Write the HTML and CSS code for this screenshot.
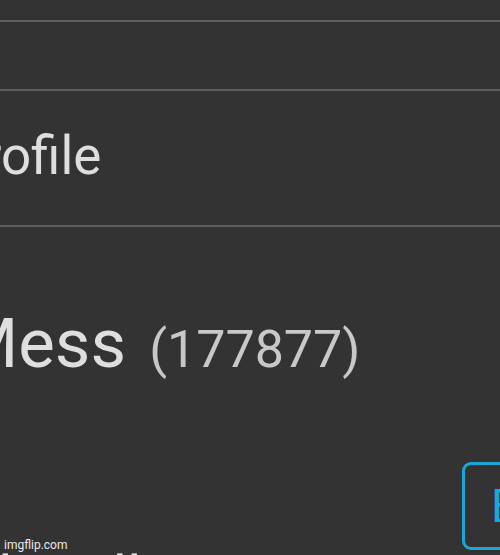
FILE: index.html
```html
<!DOCTYPE html>
<html lang="en">
<head>
<meta charset="utf-8">
<title>Profile</title>
<link rel="stylesheet" href="styles.css">
</head>
<body>
<main class="screen">
  <div class="top-gap"></div>
  <div class="row row-empty"></div>
  <div class="row row-label">
    <span class="label">Profile</span>
  </div>
  <section class="user">
    <h1 class="username">Mess <span class="points">(177877)</span></h1>
  </section>
  <div class="actions">
    <span class="sub">l. Bell</span>
    <button class="edit-btn" type="button">Edit</button>
  </div>
</main>
<div class="watermark">imgflip.com</div>
</body>
</html>
```
FILE: styles.css
```css
html, body {
  margin: 0;
  padding: 0;
  background: #333333;
  width: 500px;
  height: 555px;
  overflow: hidden;
}
body {
  position: relative;
  font-family: Roboto, "Noto Sans", sans-serif;
  color: #dedede;
}
.screen {
  display: flex;
  flex-direction: column;
  width: 500px;
  height: 555px;
  overflow: hidden;
}
.top-gap {
  height: 20px;
  flex: none;
}
.row {
  border-top: 2px solid #5f5f5f;
  flex: none;
}
.row-empty {
  height: 67px;
}
.row-label {
  display: flex;
  padding: 39px 0 42px 0;
  border-bottom: 2px solid #5f5f5f;
}
.label {
  font-size: 53px;
  line-height: 1;
  margin-left: -50px;
  white-space: nowrap;
}
.user {
  flex: none;
  padding-top: 82px;
}
.username {
  margin: 0;
  font-weight: 400;
  font-size: 69px;
  line-height: 1;
  white-space: nowrap;
  margin-left: -42px;
  color: #dedede;
}
.points {
  font-size: 52px;
  margin-left: 6px;
  color: #c8c8c8;
}
.actions {
  flex: none;
  display: flex;
  align-items: flex-start;
  margin-top: 84px;
}
.sub {
  flex: 1;
  padding-top: 86px;
  font-size: 60px;
  line-height: 1;
  white-space: nowrap;
  color: #dedede;
  margin-left: -2px;
}
.edit-btn {
  flex: none;
  width: 130px;
  height: 88px;
  margin-right: -92px;
  background: transparent;
  border: 3px solid #1ba8d9;
  border-radius: 9px;
  color: #1ba8d9;
  font-family: Roboto, sans-serif;
  font-size: 46px;
  text-align: left;
  padding: 0 0 0 26px;
  line-height: 1;
}
.watermark {
  position: absolute;
  left: 4px;
  bottom: 4px;
  font-family: Roboto, "Liberation Sans", sans-serif;
  font-size: 12px;
  color: #e8e8e8;
  line-height: 1;
}
```
